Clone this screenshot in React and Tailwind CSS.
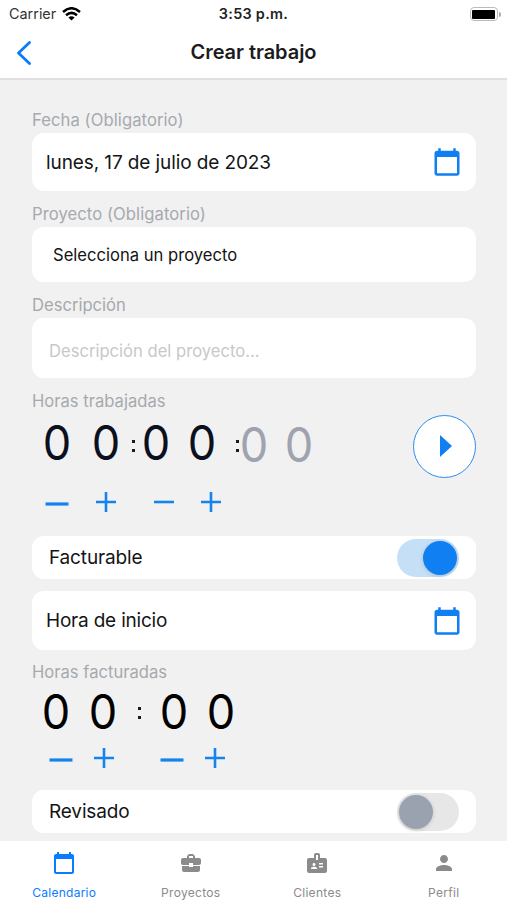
import { useState } from 'react';
import { MdBadge, MdBusinessCenter, MdCalendarToday, MdPerson } from 'react-icons/md';

const Label = ({ children, className }) => (
  <div className={`h-[26px] text-[16.6px] leading-[26px] text-[#a6a9ae] whitespace-nowrap ${className}`}>{children}</div>
);

const Digit = ({ children, className }) => (
  <span className={`w-8 shrink-0 scale-x-[0.94] text-center text-[48px] leading-[48px] ${className}`}>{children}</span>
);

const Colon = ({ className }) => (
  <span className={`flex w-1 shrink-0 flex-col items-center gap-[6px] ${className}`}>
    <i className="size-[3px] bg-[#1a1a1a]" />
    <i className="size-[3px] bg-[#1a1a1a]" />
  </span>
);

const Minus = ({ className, thick }) => (
  <button className={`shrink-0 ${className}`}>
    <svg className="block" width="24" height="24" viewBox="0 0 24 24">
      {thick ? <path d="M.5 14h23" stroke="#1583ee" strokeWidth="3.2" /> : <path d="M2 12h20" stroke="#1583ee" strokeWidth="2.6" />}
    </svg>
  </button>
);

const Plus = ({ className }) => (
  <button className={`shrink-0 ${className}`}>
    <svg className="block" width="24" height="24" viewBox="0 0 24 24">
      <path d="M2 12h20M12 2v20" stroke="#1583ee" strokeWidth="2.6" />
    </svg>
  </button>
);

const Switch = ({ on, onClick }) => (
  <button
    onClick={onClick}
    className={`flex h-[38px] w-[62px] items-center rounded-full px-[2px] ${on ? 'justify-end bg-[#c5dff7]' : 'justify-start bg-[#e7e7e7]'}`}
  >
    <span className={`size-[34px] rounded-full shadow-[0_1px_4px_rgba(0,0,0,0.15)] ${on ? 'bg-[#0f7ff2]' : 'bg-[#9aa2af]'}`} />
  </button>
);

const tabs = [
  { name: 'Calendario', icon: MdCalendarToday, spacing: 'tracking-[0.25px]' },
  { name: 'Proyectos', icon: MdBusinessCenter, spacing: 'tracking-[0.3px]' },
  { name: 'Clientes', icon: MdBadge, spacing: 'tracking-[0.3px]' },
  { name: 'Perfil', icon: MdPerson, spacing: 'tracking-[0.3px]' },
];

const App = () => {
  const [billable, setBillable] = useState(true);
  const [reviewed, setReviewed] = useState(false);

  return (
    <div className="flex h-[900px] w-[507px] flex-col overflow-hidden bg-[#f1f1f1] font-['Inter',sans-serif] text-[#141414]">
      {/* Status bar */}
      <div className="grid h-[28px] shrink-0 grid-cols-3 items-center bg-white px-[7px]">
        <div className="flex items-center gap-[6px] pl-[2px] text-[14.4px] text-[#333]">
          <span>Carrier</span>
          <svg width="19" height="14" viewBox="0 0 19 14" fill="none" stroke="#000" strokeWidth="2.5">
            <path d="M1 5Q9.500-2.500 18 5" />
            <path d="M4 8.200Q9.500 3.600 15 8.200" />
            <path d="M6.400 10.400Q9.500 8 12.600 10.400L9.500 13.600z" fill="#000" stroke="none" />
          </svg>
        </div>
        <div className="text-center text-[14.4px] font-semibold tracking-[0.3px] text-[#222] whitespace-nowrap">3:53 p.m.</div>
        <div className="flex items-center justify-end gap-[1px] -mr-px">
          <span className="h-[14px] w-[28px] rounded-[4px] border-[1.5px] border-[#bbb] p-[1.5px]">
            <span className="block h-full rounded-[1px] bg-black" />
          </span>
          <span className="h-[5px] w-[2px] rounded-r-full bg-[#aaa]" />
        </div>
      </div>

      {/* Header */}
      <header className="grid h-[52px] shrink-0 grid-cols-[60px_1fr_60px] items-center border-b-2 border-[#e0e0e0] bg-white">
        <button className="pl-[16px]">
          <svg className="block" width="17" height="24" viewBox="0 0 17 24" fill="none" stroke="#0a7cf5" strokeWidth="2.8" strokeLinecap="round" strokeLinejoin="round">
            <path d="M13.500 1.500L2.500 12l11 10.500" />
          </svg>
        </button>
        <h1 className="pb-[2px] text-center text-[20px] font-semibold tracking-[-0.05px] text-[#1c1c1e]">Crear trabajo</h1>
      </header>

      <main className="min-h-0 flex-1 overflow-hidden pl-[32px] pr-[31px] pt-[27px]">
        <Label className="tracking-[0.08px]">Fecha (Obligatorio)</Label>
        <div className="flex h-[58px] items-center justify-between rounded-[12px] bg-white pl-[14px] pr-[14px]">
          <span className="pt-[2px] text-[19px] tracking-[-0.1px]">lunes, 17 de julio de 2023</span>
          <MdCalendarToday size={30} color="#0f7ff2" />
        </div>

        <Label className="mt-[10px] tracking-[0.08px]">Proyecto (Obligatorio)</Label>
        <div className="flex h-[55px] items-center rounded-[12px] bg-white pl-[21px]">
          <span className="pt-px text-[16.6px]">Selecciona un proyecto</span>
        </div>

        <Label className="mt-[10px]">Descripción</Label>
        <div className="flex h-[60px] items-center rounded-[12px] bg-white pl-[17px] pt-[6px]">
          <span className="text-[16.6px] text-[#c8c8ca]">Descripción del proyecto...</span>
        </div>

        <Label className="mt-[10px]">Horas trabajadas</Label>
        <div className="flex h-[64px] items-center">
          <Digit className="mb-[7px] ml-[9px] text-[#0b1020]">0</Digit>
          <Digit className="mb-[7px] ml-[17px] text-[#0b1020]">0</Digit>
          <Colon className="ml-[9px]" />
          <Digit className="mb-[7px] ml-[5px] text-[#0b1020]">0</Digit>
          <Digit className="mb-[7px] ml-[14px] text-[#0b1020]">0</Digit>
          <Colon className="ml-[17px]" />
          <Digit className="-ml-px mb-[3px] text-[#9fa3af]">0</Digit>
          <Digit className="mb-[3px] ml-[13px] text-[#9fa3af]">0</Digit>
          <button className="ml-auto flex size-[63px] items-center justify-center rounded-full border-[1.5px] border-[#2b8cf0] bg-white pl-[3px]">
            <svg width="12" height="22" viewBox="0 0 12 22" fill="#0f7ff2">
              <path d="M0 0l12 11L0 22z" />
            </svg>
          </button>
        </div>

        <div className="mt-[12px] flex h-[24px]">
          <Minus thick className="ml-[13px]" />
          <Plus className="ml-[25px]" />
          <Minus className="ml-[34px]" />
          <Plus className="ml-[23px]" />
        </div>

        <div className="mt-[22px] flex h-[43px] items-center justify-between rounded-[12px] bg-white pl-[17px] pr-[17px]">
          <span className="pt-[2px] text-[19px] tracking-[-0.15px]">Facturable</span>
          <Switch on={billable} onClick={() => setBillable(!billable)} />
        </div>

        <div className="mt-[12px] flex h-[59px] items-center justify-between rounded-[12px] bg-white pl-[14px] pr-[14px]">
          <span className="pt-[2px] text-[19px] tracking-[-0.2px]">Hora de inicio</span>
          <MdCalendarToday size={30} color="#0f7ff2" />
        </div>

        <Label className="mt-[9px]">Horas facturadas</Label>
        <div className="flex h-[56px] items-center text-black">
          <Digit className="mb-[2px] ml-[8px]">0</Digit>
          <Digit className="mb-[2px] ml-[15px]">0</Digit>
          <Colon className="ml-[18px]" />
          <Digit className="mb-[2px] ml-[17px]">0</Digit>
          <Digit className="mb-[2px] ml-[15px]">0</Digit>
        </div>

        <div className="mt-[5px] flex h-[24px]">
          <Minus thick className="ml-[17px]" />
          <Plus className="ml-[19px]" />
          <Minus thick className="ml-[44px]" />
          <Plus className="ml-[19px]" />
        </div>

        <div className="mt-[20px] flex h-[43px] items-center justify-between rounded-[12px] bg-white pl-[17px] pr-[17px]">
          <span className="pt-[2px] text-[19px] tracking-[-0.15px]">Revisado</span>
          <Switch on={reviewed} onClick={() => setReviewed(!reviewed)} />
        </div>
      </main>

      {/* Bottom tabs */}
      <nav className="grid h-[59px] shrink-0 grid-cols-4 bg-white pl-px">
        {tabs.map((tab, i) => (
          <button key={tab.name} className={`flex flex-col items-center pt-[10px] ${i === 0 ? 'text-[#0a7cff]' : 'text-[#8b8b8b]'}`}>
            <tab.icon size={24} />
            <span className={`mt-[9px] text-[12px] leading-[18px] ${tab.spacing}`}>{tab.name}</span>
          </button>
        ))}
      </nav>
    </div>
  );
};

export default App;
